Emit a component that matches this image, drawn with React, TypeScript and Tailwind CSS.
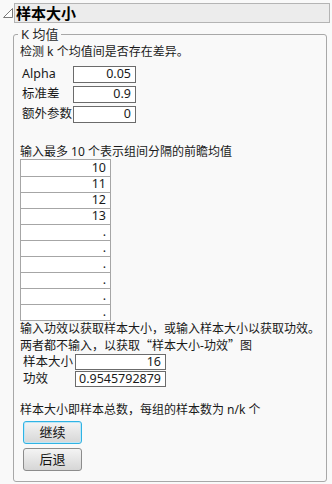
import React from "react";

const font = { fontFamily: '"Noto Sans", "Noto Sans CJK SC", sans-serif' };
const cjk = { fontFamily: '"Noto Sans CJK SC", sans-serif' };

function NumBox({ value, w }: { value: string; w: string }) {
  return (
    <div className={`${w} h-full border border-[#6b6b6b] bg-white flex items-center justify-end pr-[4px] text-[12.5px] leading-none text-[#1a1a1a]`}>
      {value}
    </div>
  );
}

function Btn({ label, focused }: { label: string; focused?: boolean }) {
  return (
    <div
      className={`w-[59px] h-[23px] rounded-[3px] flex items-center justify-center text-[13px] text-[#111] bg-gradient-to-b from-[#f4f4f4] to-[#d6d6d6] ${
        focused ? "border border-[#2fb3e4] shadow-[inset_0_0_0_1px_#bfe6f6]" : "border border-[#8c8c8c]"
      }`}
    >
      {label}
    </div>
  );
}

export default function App() {
  const vals = ["10", "11", "12", "13", ".", ".", ".", ".", ".", "."];
  return (
    <div className="w-[332px] h-[484px] bg-[#f9f9f9] overflow-hidden text-[#1a1a1a]" style={font}>
      <div className="flex pt-[3px] pr-[2px]">
        <div className="w-[14px] h-[20px] flex items-start pt-[5px] pl-[3px]">
          <svg width="10" height="10" viewBox="0 0 10 10">
            <path d="M0.5 9.5 L9.5 0.5 L9.5 9.5 Z" fill="#ffffff" stroke="#7a7a7a" strokeWidth="1" />
          </svg>
        </div>
        <div className="flex-1 h-[20px] bg-[#ececec] border border-[#b4b4b4] flex items-center pl-[1px]">
          <span className="text-[15px] font-bold text-black leading-none">样本大小</span>
        </div>
      </div>

      <div className="relative mt-[11px] ml-[13px] mr-[5px] h-[448px] border border-[#a8a8a8] rounded-[3px] pt-[9px] pl-[6px]">
        <div className="absolute left-[4px] top-[-9px] px-[3px] bg-[#f9f9f9] text-[13px] leading-[16px] text-[#2a2a2a]">
          K 均值
        </div>

        <div className="h-[16px] text-[12px] leading-[16px]">检测 k 个均值间是否存在差异。</div>

        <div className="mt-[6px] flex flex-col gap-[3px]">
          {[
            ["Alpha", "0.05"],
            ["标准差", "0.9"],
            ["额外参数", "0"],
          ].map(([l, v]) => (
            <div key={l} className="flex h-[17px] items-center">
              <div className="w-[53px] pl-[2px] text-[12.5px] leading-none">{l}</div>
              <NumBox value={v} w="w-[63px]" />
            </div>
          ))}
        </div>

        <div className="mt-[21px] h-[15px] text-[12px] leading-[15px]">输入最多 10 个表示组间分隔的前瞻均值</div>

        <div className="w-[91px] border border-[#a6a6a6] bg-white flex flex-col">
          {vals.map((v, i) => (
            <div
              key={i}
              className={`h-[16px] flex items-center justify-end pr-[4px] text-[12.5px] leading-none ${
                i > 0 ? "border-t border-[#a6a6a6]" : ""
              }`}
            >
              {v}
            </div>
          ))}
        </div>

        <div className="text-[12px] leading-[16px]">
          <div>输入功效以获取样本大小，或输入样本大小以获取功效。</div>
          <div>
            两者都不输入，以获取<span style={cjk}>“</span>样本大小-功效<span style={cjk}>”</span>图
          </div>
        </div>

        <div className="flex flex-col gap-[1px]">
          {[
            ["样本大小", "16"],
            ["功效", "0.9545792879"],
          ].map(([l, v]) => (
            <div key={l} className="flex h-[16px] items-center">
              <div className="w-[55px] pl-[3px] text-[12.5px] leading-none">{l}</div>
              <NumBox value={v} w="w-[91px]" />
            </div>
          ))}
        </div>

        <div className="mt-[15px] h-[16px] text-[12px] leading-[16px]">样本大小即样本总数，每组的样本数为 n/k 个</div>

        <div className="mt-[3px] pl-[3px] flex flex-col gap-[4px]">
          <Btn label="继续" focused />
          <Btn label="后退" />
        </div>
      </div>
    </div>
  );
}
